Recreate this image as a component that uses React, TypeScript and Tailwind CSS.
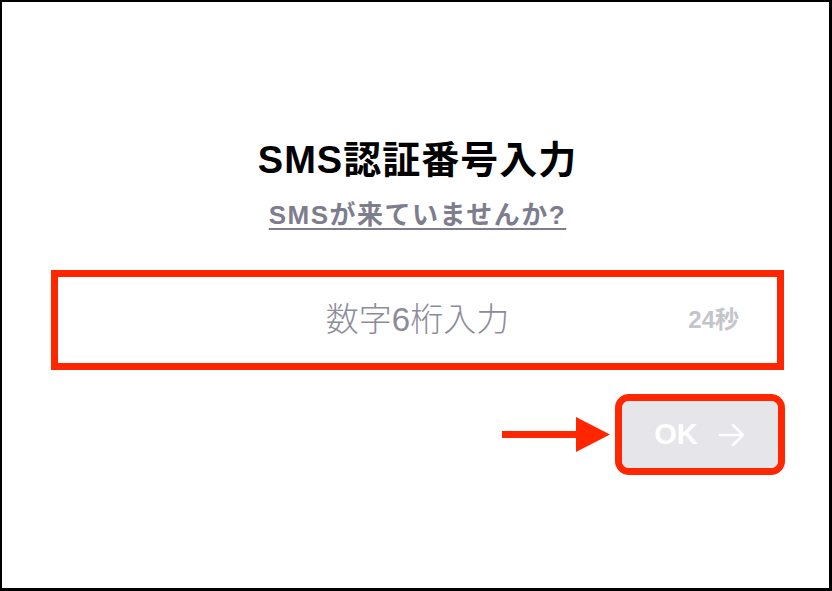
import React from 'react';

const FONT = '"Liberation Sans", "Noto Sans CJK JP", sans-serif';

function PointerArrow() {
  return (
    <svg width="110" height="36" viewBox="0 0 110 36" className="block">
      <rect x="0" y="14" width="76" height="7" fill="#ff2600" />
      <polygon points="74,0 108,17.5 74,35" fill="#ff2600" />
    </svg>
  );
}

export default function App() {
  return (
    <div
      className="w-[832px] h-[591px] bg-white border-black border-l-2 border-t-2 border-r-[3px] border-b-[3px] flex flex-col"
      style={{ fontFamily: FONT }}
    >
      <div className="pl-[49px] pr-[45px] pt-[135px] flex flex-col items-center">
        <h1 className="text-[38px] leading-[46px] font-bold text-black tracking-[1px]">
          SMS認証番号入力
        </h1>
        <a className="mt-[17px] text-[26px] leading-[30px] font-bold text-[#7d7d8e] underline underline-offset-[4px] decoration-2 tracking-[1.5px]">
          SMSが来ていませんか?
        </a>

        <div className="mt-[40px] w-full h-[100px] border-[7px] border-[#ff2600] relative flex items-center justify-center">
          <span className="text-[33px] leading-[40px] text-[#8c8c99] font-light">数字6桁入力</span>
          <span className="absolute right-[38px] top-1/2 -translate-y-1/2 text-[24px] font-bold text-[#c4c4cc]">
            24秒
          </span>
        </div>

        <div className="w-full mt-[24px] flex justify-end items-center">
          <PointerArrow />
          <div className="ml-[3px] mr-[-1px] w-[170px] h-[81px] border-[7px] border-[#ff2600] rounded-[14px] bg-white">
            <div className="w-full h-full rounded-[7px] bg-[#e5e5ea] flex items-center justify-center gap-[20px] text-white font-bold">
              <span className="text-[29px] leading-none">OK</span>
              <svg width="28" height="24" viewBox="0 0 28 24" fill="none" stroke="white" strokeWidth="2.5" strokeLinecap="round" strokeLinejoin="round">
                <path d="M2 12h23" />
                <path d="M15 2l10 10-10 10" />
              </svg>
            </div>
          </div>
        </div>
      </div>
    </div>
  );
}
